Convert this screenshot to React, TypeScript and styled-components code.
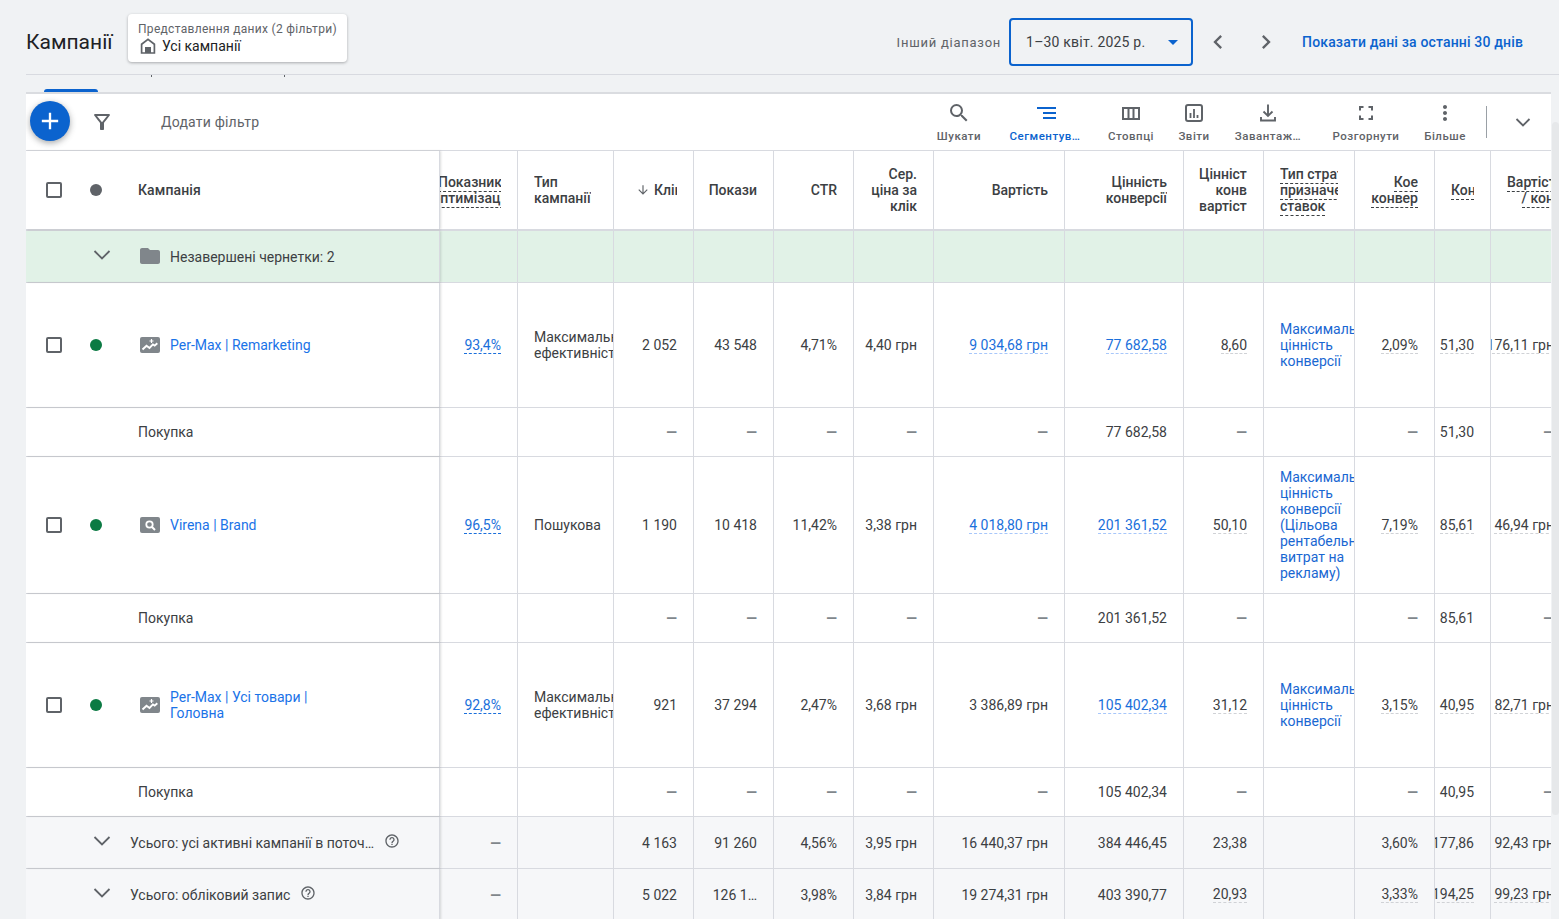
import React from 'react';
import styled, { createGlobalStyle } from 'styled-components';
import {
  MdAdd, MdArrowDownward, MdArrowDropDown, MdChevronLeft, MdChevronRight,
  MdFolder, MdHelpOutline, MdMoreVert, MdOutlineFilterAlt, MdSearch,
} from 'react-icons/md';

const Global = createGlobalStyle`
  html, body { margin: 0; padding: 0; height: 100%; overflow: hidden; background: #f0f2f4; }
  * { box-sizing: border-box; }
  body { font-family: Roboto, "Liberation Sans", sans-serif; font-size: 14px; color: #3c4043; }
`;

const TEMPLATE = '414px 78px 96px 80px 80px 80px 80px 131px 119px 80px 91px 80px 56px 80px';
const LINE = '#d8dae0';

const Page = styled.div`
  width: 1559px; height: 919px; padding-left: 26px; overflow: hidden; position: relative;
`;
const TopBar = styled.header`
  height: 75px; padding-top: 10px; display: flex; align-items: center; border-bottom: 1px solid ${LINE};
`;
const Title = styled.h1`
  margin: 0 16px 0 0; font-size: 21px; font-weight: 400; color: #202124; width: 86px; white-space: nowrap;
`;
const ViewChip = styled.div`
  width: 219px; height: 48px; background: #fff; border-radius: 4px; padding: 7px 10px;
  margin-top: -8px; box-shadow: 0 1px 3px rgba(60,64,67,.4);
`;
const ChipLabel = styled.div`
  font-size: 12px; line-height: 16px; color: #5f6368; letter-spacing: .3px; white-space: nowrap;
`;
const ChipValue = styled.div`
  display: flex; align-items: center; gap: 4px; font-size: 14px; line-height: 18px; color: #202124; margin-top: -1px;
  svg { display: block; }
`;
const RangeGroup = styled.div`
  margin-left: auto; margin-right: 36px; display: flex; align-items: center;
`;
const RangeLabel = styled.span`
  color: #5f6368; font-size: 13px; letter-spacing: .75px; margin-right: 8px; white-space: nowrap;
`;
const RangeBox = styled.div`
  width: 184px; height: 48px; border: 2px solid #0b63ce; border-radius: 4px; display: flex; align-items: center;
  padding: 0 6px 0 15px; margin-right: 1px; color: #3c4043; font-size: 14px; letter-spacing: .2px; white-space: nowrap;
  justify-content: space-between; svg { font-size: 24px; color: #0b63ce; }
`;
const Arrow = styled.span`
  width: 48px; display: flex; justify-content: center; color: #5f6368; svg { font-size: 28px; }
`;
const LastLink = styled.a`
  margin-left: 12px; color: #0b63ce; font-weight: 500; font-size: 14px; letter-spacing: .16px; white-space: nowrap;
`;
const TabStrip = styled.div`
  height: 17px; position: relative;
`;
const TabMark = styled.div`
  position: absolute; left: 18px; bottom: 0; width: 54px; height: 3px; background: #0b63ce; border-radius: 3px 3px 0 0;
`;
const Tick = styled.i<{ $x: number }>`
  position: absolute; top: 0; left: ${p => p.$x}px; width: 1px; height: 2px; background: #5f6368;
`;
const Card = styled.section`
  width: 1525px; height: 828px; background: #fff; border-top: 2px solid #dadce0; overflow: hidden; position: relative;
`;
const Toolbar = styled.div`
  height: 57px; display: flex; align-items: center; border-bottom: 1px solid ${LINE}; padding-right: 16px;
`;
const Fab = styled.button`
  position: absolute; left: 4px; top: 7px; width: 40px; height: 40px; border: 0; border-radius: 50%;
  background: #0b63ce; color: #fff; display: flex; align-items: center; justify-content: center; padding: 0;
  box-shadow: 0 2px 6px rgba(60,64,67,.45); svg { font-size: 28px; }
`;
const FilterIcon = styled.span`
  margin-left: 64px; width: 24px; height: 24px; color: #5f6368; svg { font-size: 24px; display: block; }
`;
const AddFilter = styled.span`
  margin-left: 47px; color: #5f6368; font-size: 14px; letter-spacing: .2px;
`;
const Tools = styled.div`
  margin-left: auto; display: flex; align-items: flex-start;
`;
const Tool = styled.div<{ $w: number; $on?: boolean }>`
  width: ${p => p.$w}px; display: flex; flex-direction: column; align-items: center; gap: 3px;
  color: ${p => (p.$on ? '#0b63ce' : '#5f6368')};
  svg { font-size: 24px; display: block; }
`;
const ToolLabel = styled.span`
  font-size: 11.5px; line-height: 16px; font-weight: 500; letter-spacing: .5px; white-space: nowrap;
`;
const Divider = styled.div`
  width: 1px; height: 32px; background: #9aa0a6; margin: 0 24px 0 15px;
`;
const Collapse = styled.span`
  width: 24px; height: 24px; color: #5f6368; svg { display: block; }
`;
const Row = styled.div<{ $h: number; $bg?: string; $thick?: boolean }>`
  display: grid; grid-template-columns: ${TEMPLATE}; height: ${p => p.$h}px;
  background: ${p => p.$bg || '#fff'};
  border-bottom: ${p => (p.$thick ? '2px' : '1px')} solid ${LINE};
`;
const Frozen = styled.div`
  display: flex; align-items: center; border-right: 1px solid ${LINE}; position: relative; z-index: 1;
  box-shadow: 1px 0 2px rgba(60,64,67,.18); min-width: 0;
`;
const CheckSlot = styled.span`
  width: 56px; display: flex; justify-content: center; flex-shrink: 0;
`;
const Check = styled.i`
  width: 16px; height: 16px; border: 2px solid #5f6368; border-radius: 2px; display: block;
`;
const DotSlot = styled.span`
  width: 28px; display: flex; justify-content: center; flex-shrink: 0;
`;
const Dot = styled.i<{ $c: string }>`
  width: 12px; height: 12px; border-radius: 50%; background: ${p => p.$c}; display: block;
`;
const ChevronSlot = styled.span`
  margin-left: 64px; width: 24px; height: 24px; color: #5f6368; flex-shrink: 0; margin-top: -4px;
  svg { display: block; }
`;
const TypeIcon = styled.span`
  margin-left: 30px; width: 20px; height: 16px; margin-right: 10px; flex-shrink: 0; svg { display: block; }
`;
const CampaignName = styled.a`
  color: #1a73e8; line-height: 16px; width: 150px; font-size: 14px;
`;
const FrozenLabel = styled.span<{ $strong?: boolean; $indent?: number }>`
  margin-left: ${p => p.$indent ?? 112}px; line-height: 16px; color: #3c4043;
  font-weight: ${p => (p.$strong ? 500 : 400)}; letter-spacing: ${p => (p.$strong ? '.1px' : '0')};
`;
const DraftIcon = styled.span`
  margin-left: 26px; margin-right: 8px; width: 22px; height: 24px; color: #80868b; flex-shrink: 0; margin-top: -1px;
  svg { font-size: 24px; display: block; margin-left: -2px; }
`;
const DraftText = styled.span`
  white-space: nowrap;
`;
const TotalText = styled.span`
  margin-left: 16px; display: flex; align-items: center; gap: 10px; white-space: nowrap;
  svg { font-size: 16px; color: #5f6368; margin-top: -4px; }
`;
const Cell = styled.div<{ $left?: boolean }>`
  display: flex; align-items: center; justify-content: ${p => (p.$left ? 'flex-start' : 'flex-end')};
  padding: ${p => (p.$left ? '0 0 0 16px' : '0 16px')}; overflow: hidden; border-right: 1px solid ${LINE};
  white-space: pre; min-width: 0;
`;
const Value = styled.span<{ $blue?: boolean; $dash?: 'gray' | 'blue' | 'strong'; $empty?: boolean }>`
  flex-shrink: 0; line-height: 16px;
  font-weight: ${p => (p.$empty ? 700 : 400)};
  color: ${p => (p.$empty ? '#80868b' : p.$blue ? '#1a6fdb' : '#3c4043')};
  border-bottom: ${p =>
    p.$dash === 'gray' ? '1px dashed #d0d2d6' : p.$dash === 'blue' ? '1px dashed #a8c7fa' : p.$dash === 'strong' ? '1px dashed #1a6fdb' : '0 none'};
`;
const Multi = styled.span<{ $blue?: boolean }>`
  line-height: 16px; flex-shrink: 0; color: ${p => (p.$blue ? '#1967d2' : '#3c4043')};
`;
const HeadCell = styled(Cell)`
  font-weight: 500; font-size: 14px; color: #3c4043; gap: 4px;
`;
const HeadClip = styled.div<{ $w?: number; $left?: boolean }>`
  width: ${p => (p.$w ? `${p.$w}px` : 'auto')}; overflow: hidden; padding: 2px 0; text-align: ${p => (p.$left ? 'left' : 'right')}; flex-shrink: 0;
`;
const HeadLine = styled.div<{ $center?: boolean }>`
  height: 16px; line-height: 17px; display: ${p => (p.$center ? 'flex' : 'block')}; justify-content: center; align-items: flex-start;
`;
const Dashed = styled.span<{ $on?: boolean }>`
  display: inline-block; vertical-align: top; height: 18px; line-height: 17px; flex-shrink: 0;
  border-bottom: ${p => (p.$on ? '1px dashed #3c4043' : '0 none')};
`;
const SortIcon = styled.span`
  display: flex; color: #5f6368; svg { font-size: 14px; }
`;
const Scroll = styled.div`
  position: absolute; right: 0; top: 122px; width: 7px; height: 693px; background: #e6e8ea; border-radius: 4px;
`;

const ChevronDown = ({ wide }: { wide?: boolean }) => (
  <svg width="24" height="24" viewBox="0 0 24 24" fill="none" stroke="currentColor" strokeWidth="1.8">
    {wide ? <path d="M4.5 8l7.5 7.5L19.5 8" /> : <path d="M5.5 9l6.5 6.5L18.5 9" />}
  </svg>
);
const HomeIcon = () => (
  <svg width="20" height="20" viewBox="0 0 20 20">
    <path d="M3.6 17V8.2L10 3.4l6.4 4.8V17z" fill="none" stroke="#5f6368" strokeWidth="1.7" />
    <rect x="7" y="11" width="6" height="6" fill="#5f6368" />
  </svg>
);
const Spark = () => (
  <svg width="20" height="16" viewBox="0 0 20 16">
    <rect width="20" height="16" rx="2" fill="#80868b" />
    <path d="M2.5 12.5l4-3.8 3 2.3 3.4-3.6 1.8 1.2 2.6-2.4" fill="none" stroke="#fff" strokeWidth="1.9" />
    <path d="M11.5 2v4M9.5 4h4" stroke="#fff" strokeWidth="1.2" />
  </svg>
);
const SearchType = () => (
  <svg width="20" height="16" viewBox="0 0 20 16">
    <rect width="20" height="16" rx="2" fill="#80868b" />
    <circle cx="9.5" cy="7.5" r="3.2" fill="none" stroke="#fff" strokeWidth="1.8" />
    <path d="M12 10l3 3" stroke="#fff" strokeWidth="2" />
  </svg>
);
const SegmentIcon = () => (
  <svg width="24" height="24" viewBox="0 0 24 24" fill="currentColor">
    <rect x="4" y="6" width="19" height="2" /><rect x="10" y="11" width="13" height="2" /><rect x="10" y="16" width="13" height="2" />
  </svg>
);
const ColumnsIcon = () => (
  <svg width="24" height="24" viewBox="0 0 24 24" fill="none" stroke="currentColor" strokeWidth="2">
    <rect x="4" y="7" width="16" height="11" /><path d="M9.5 7v11M14.5 7v11" />
  </svg>
);
const ReportIcon = () => (
  <svg width="24" height="24" viewBox="0 0 24 24" fill="none" stroke="currentColor" strokeWidth="2">
    <rect x="4" y="4" width="16" height="16" rx="2" />
    <path d="M8.5 12v5M12 8v9M15.5 14v3" strokeWidth="1.8" />
  </svg>
);
const DownloadIcon = () => (
  <svg width="24" height="24" viewBox="0 0 24 24" fill="none" stroke="currentColor" strokeWidth="1.9">
    <path d="M12 3.5v11.5M7.5 10.5L12 15l4.5-4.5M5 16v3.5h14V16" />
  </svg>
);
const ExpandIcon = () => (
  <svg width="24" height="24" viewBox="0 0 24 24" fill="none" stroke="currentColor" strokeWidth="2">
    <path d="M6 9.5V6h3.5M14.5 6H18v3.5M18 14.5V18h-3.5M9.5 18H6v-3.5" />
  </svg>
);

type V = string | { t: string; kind: 'score' | 'link' | 'gray' | 'text' | 'strategy' };
const score = (t: string): V => ({ t, kind: 'score' });
const link = (t: string): V => ({ t, kind: 'link' });
const g = (t: string): V => ({ t, kind: 'gray' });
const text = (t: string): V => ({ t, kind: 'text' });
const strat = (t: string): V => ({ t, kind: 'strategy' });

const MAX_EFF = 'Максимальна\nефективність';
const MAX_VAL = 'Максимальна\nцінність\nконверсії';

const DataCell = ({ v }: { v: V }) => {
  if (typeof v === 'string') {
    return (
      <Cell>
        {v && <Value $empty={v === '—'}>{v}</Value>}
      </Cell>
    );
  }
  if (v.kind === 'text') return <Cell $left><Multi>{v.t}</Multi></Cell>;
  if (v.kind === 'strategy') return <Cell $left><Multi $blue>{v.t}</Multi></Cell>;
  if (v.kind === 'score') return <Cell><Value $blue $dash="strong">{v.t}</Value></Cell>;
  if (v.kind === 'link') return <Cell><Value $blue $dash="blue">{v.t}</Value></Cell>;
  return <Cell><Value $dash="gray">{v.t}</Value></Cell>;
};

const Cells = ({ values }: { values: V[] }) => (
  <>
    {values.map((v, i) => <DataCell key={i} v={v} />)}
  </>
);

const campaign = (h: number, icon: React.ReactNode, name: string, values: V[]) => (
  <Row $h={h}>
    <Frozen>
      <CheckSlot><Check /></CheckSlot>
      <DotSlot><Dot $c="#0b7a43" /></DotSlot>
      <TypeIcon>{icon}</TypeIcon>
      <CampaignName>{name}</CampaignName>
    </Frozen>
    <Cells values={values} />
  </Row>
);

const purchase = (values: V[]) => (
  <Row $h={49}>
    <Frozen><FrozenLabel>Покупка</FrozenLabel></Frozen>
    <Cells values={values} />
  </Row>
);

const total = (h: number, label: string, values: V[]) => (
  <Row $h={h} $bg="#f6f7f9">
    <Frozen>
      <ChevronSlot><ChevronDown wide /></ChevronSlot>
      <TotalText>{label}<MdHelpOutline /></TotalText>
    </Frozen>
    <Cells values={values} />
  </Row>
);

const head = (lines: string[], dashed = false, w?: number, left?: boolean) => (
  <HeadCell>
    <HeadClip $w={w} $left={left}>
      {lines.map((l, i) => <HeadLine key={i}><Dashed $on={dashed}>{l}</Dashed></HeadLine>)}
    </HeadClip>
  </HeadCell>
);

const d = '—';

export default function App() {
  return (
    <Page>
      <Global />
      <TopBar>
        <Title>Кампанії</Title>
        <ViewChip>
          <ChipLabel>Представлення даних (2 фільтри)</ChipLabel>
          <ChipValue><HomeIcon />Усі кампанії</ChipValue>
        </ViewChip>
        <RangeGroup>
          <RangeLabel>Інший діапазон</RangeLabel>
          <RangeBox>1–30 квіт. 2025 р.<MdArrowDropDown /></RangeBox>
          <Arrow><MdChevronLeft /></Arrow>
          <Arrow><MdChevronRight /></Arrow>
          <LastLink>Показати дані за останні 30 днів</LastLink>
        </RangeGroup>
      </TopBar>
      <TabStrip>
        <Tick $x={125} /><Tick $x={258} />
        <TabMark />
      </TabStrip>
      <Card>
        <Toolbar>
          <Fab><MdAdd /></Fab>
          <FilterIcon><MdOutlineFilterAlt /></FilterIcon>
          <AddFilter>Додати фільтр</AddFilter>
          <Tools>
            <Tool $w={68}><MdSearch /><ToolLabel>Шукати</ToolLabel></Tool>
            <Tool $w={104} $on><SegmentIcon /><ToolLabel>Сегментув…</ToolLabel></Tool>
            <Tool $w={68}><ColumnsIcon /><ToolLabel>Стовпці</ToolLabel></Tool>
            <Tool $w={58}><ReportIcon /><ToolLabel>Звіти</ToolLabel></Tool>
            <Tool $w={90}><DownloadIcon /><ToolLabel>Завантаж…</ToolLabel></Tool>
            <Tool $w={106}><ExpandIcon /><ToolLabel>Розгорнути</ToolLabel></Tool>
            <Tool $w={52}><MdMoreVert /><ToolLabel>Більше</ToolLabel></Tool>
          </Tools>
          <Divider />
          <Collapse><ChevronDown /></Collapse>
        </Toolbar>
        <Row $h={80} $thick>
          <Frozen>
            <CheckSlot><Check /></CheckSlot>
            <DotSlot><Dot $c="#5f6368" /></DotSlot>
            <FrozenLabel $strong $indent={28}>Кампанія</FrozenLabel>
          </Frozen>
          <HeadCell>
            <HeadClip $w={62}>
              <HeadLine $center><Dashed $on>Показник</Dashed></HeadLine>
              <HeadLine $center><Dashed $on>оптимізації</Dashed></HeadLine>
            </HeadClip>
          </HeadCell>
          <HeadCell $left><HeadClip $left><HeadLine>Тип</HeadLine><HeadLine>кампанії</HeadLine></HeadClip></HeadCell>
          <HeadCell>
            <SortIcon><MdArrowDownward /></SortIcon>
            <HeadClip $w={23} $left><HeadLine>Кліки</HeadLine></HeadClip>
          </HeadCell>
          {head(['Покази'])}
          {head(['CTR'])}
          {head(['Сер.', 'ціна за', 'клік'])}
          {head(['Вартість'])}
          {head(['Цінність', 'конверсії'])}
          {head(['Цінність', 'конв', 'вартість'], false, 48)}
          <HeadCell $left>
            <HeadClip $w={58} $left>
              <HeadLine><Dashed $on>Тип стратегії</Dashed></HeadLine>
              <HeadLine><Dashed $on>призначення</Dashed></HeadLine>
              <HeadLine><Dashed $on>ставок</Dashed></HeadLine>
            </HeadClip>
          </HeadCell>
          {head(['Кое', 'конвер'], true)}
          {head(['Конверсії'], true, 23, true)}
          {head(['Вартість', '/ кон'], true, 47)}
        </Row>
        <Row $h={52} $bg="#e1f2e7">
          <Frozen>
            <ChevronSlot><ChevronDown wide /></ChevronSlot>
            <DraftIcon><MdFolder /></DraftIcon>
            <DraftText>Незавершені чернетки: 2</DraftText>
          </Frozen>
          <Cells values={['', '', '', '', '', '', '', '', '', '', '', '', '']} />
        </Row>
        {campaign(125, <Spark />, 'Per-Max | Remarketing', [score('93,4%'), text(MAX_EFF), '2 052', '43 548', '4,71%', '4,40 грн', link('9 034,68 грн'), link('77 682,58'), g('8,60'), strat(MAX_VAL), g('2,09%'), g('51,30'), g('176,11 грн')])}
        {purchase(['', '', d, d, d, d, d, '77 682,58', d, '', d, '51,30', d])}
        {campaign(137, <SearchType />, 'Virena | Brand', [score('96,5%'), text('Пошукова'), '1 190', '10 418', '11,42%', '3,38 грн', link('4 018,80 грн'), link('201 361,52'), g('50,10'), strat('Максимальна\nцінність\nконверсії\n(Цільова\nрентабельність\nвитрат на\nрекламу)'), g('7,19%'), g('85,61'), g('46,94 грн')])}
        {purchase(['', '', d, d, d, d, d, '201 361,52', d, '', d, '85,61', d])}
        {campaign(125, <Spark />, 'Per-Max | Усі товари | Головна', [score('92,8%'), text(MAX_EFF), '921', '37 294', '2,47%', '3,68 грн', '3 386,89 грн', link('105 402,34'), g('31,12'), strat(MAX_VAL), g('3,15%'), g('40,95'), g('82,71 грн')])}
        {purchase(['', '', d, d, d, d, d, '105 402,34', d, '', d, '40,95', d])}
        {total(52, 'Усього: усі активні кампанії в поточ…', [d, '', '4 163', '91 260', '4,56%', '3,95 грн', '16 440,37 грн', '384 446,45', '23,38', '', '3,60%', '177,86', '92,43 грн'])}
        {total(52, 'Усього: обліковий запис', [d, '', '5 022', '126 1…', '3,98%', '3,84 грн', '19 274,31 грн', '403 390,77', g('20,93'), '', g('3,33%'), g('194,25'), g('99,23 грн')])}
      </Card>
      <Scroll />
    </Page>
  );
}
